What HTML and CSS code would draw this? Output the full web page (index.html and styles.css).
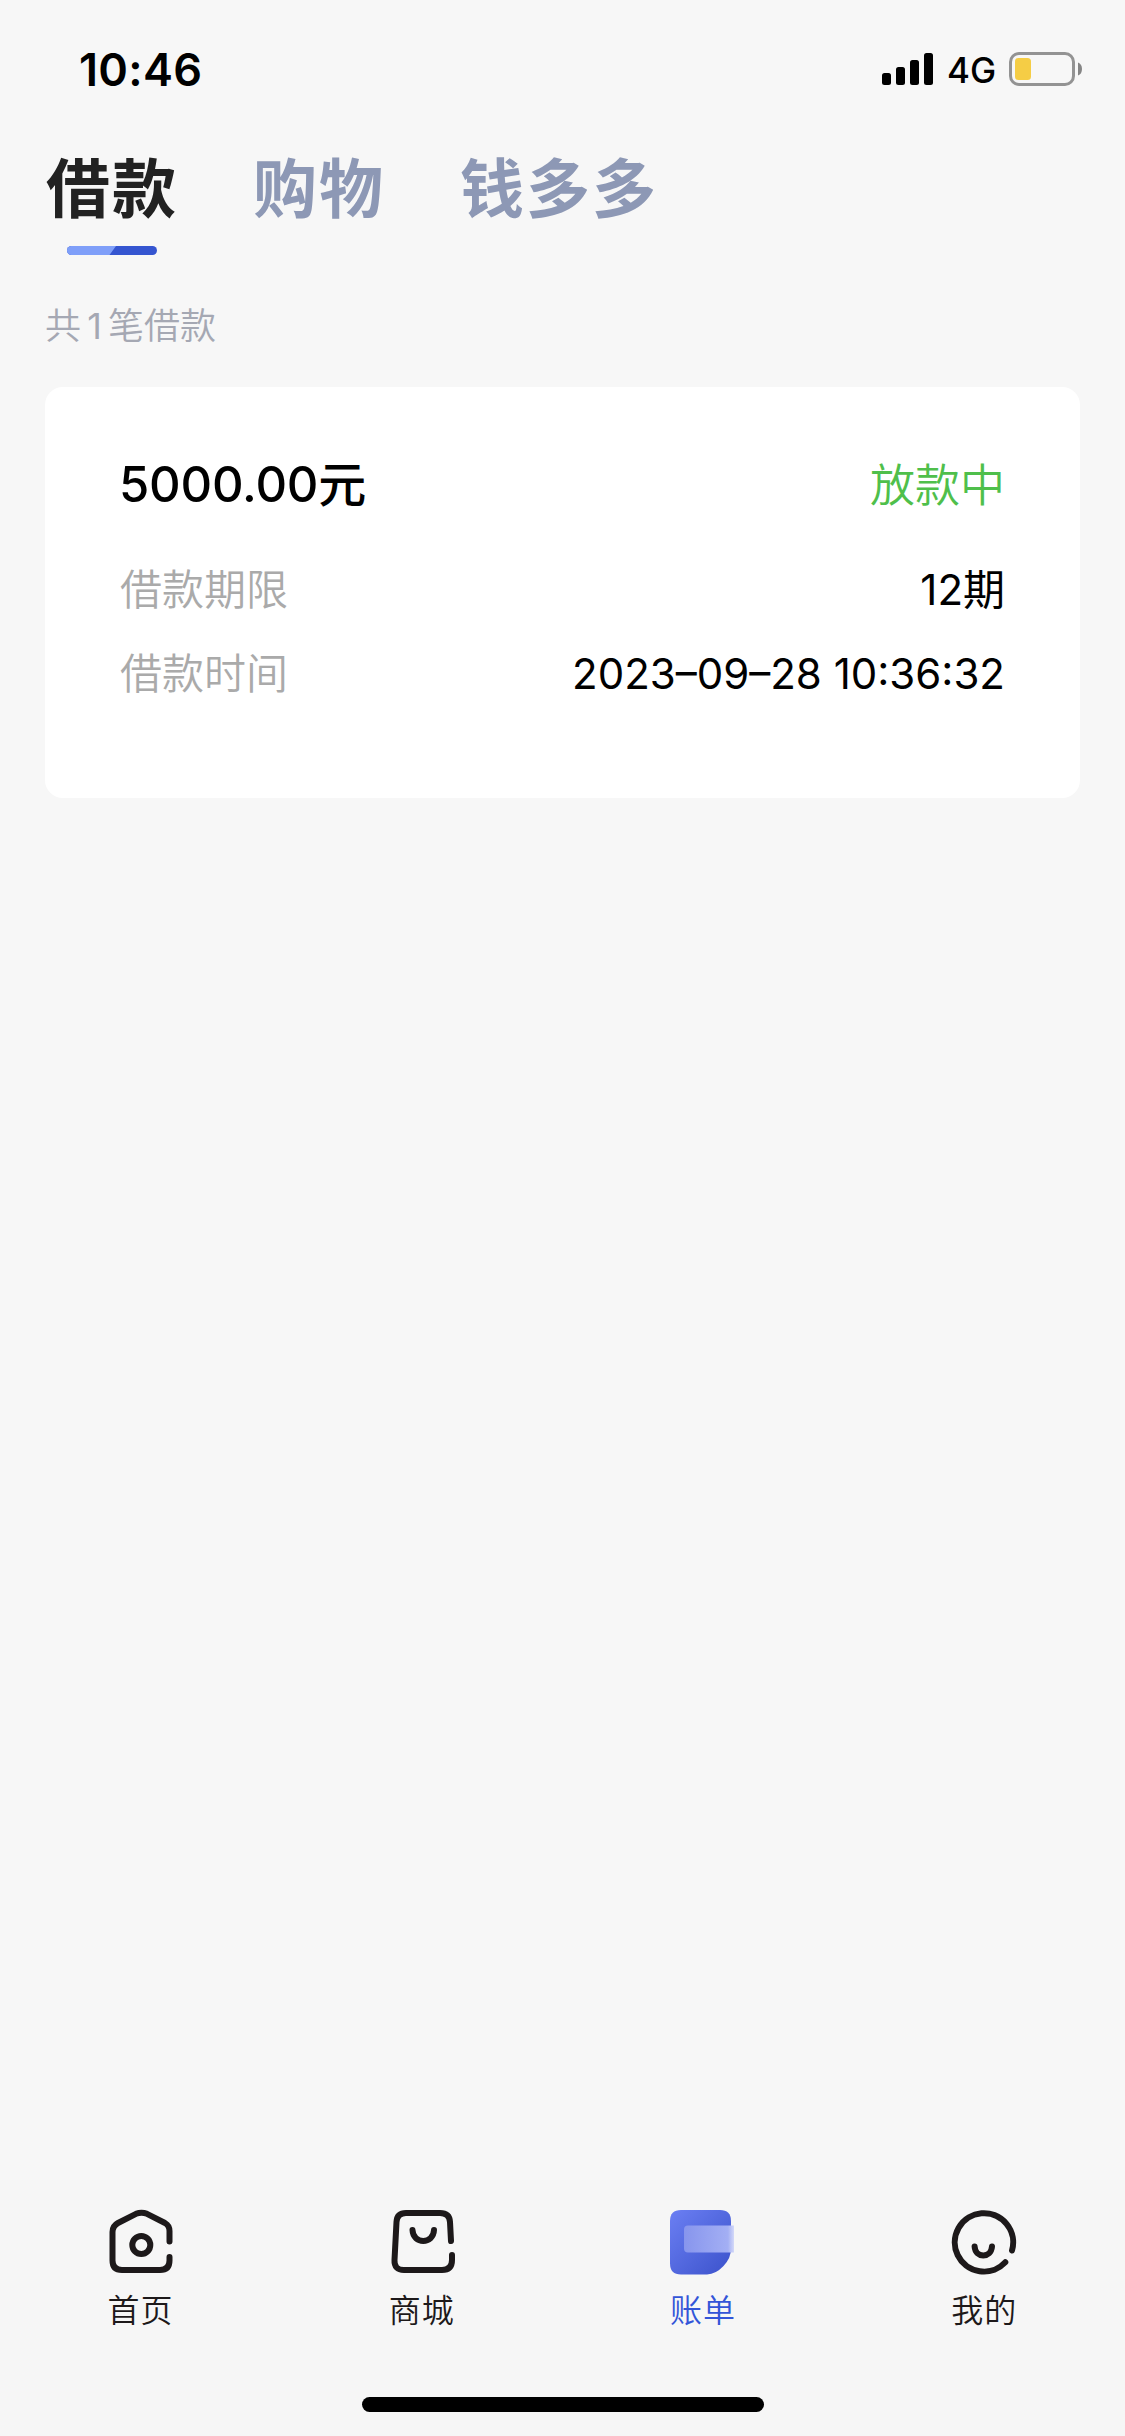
FILE: index.html
```html
<!DOCTYPE html>
<html lang="zh-CN">
<head>
<meta charset="utf-8">
<title>借款账单</title>
<link rel="stylesheet" href="styles.css">
</head>
<body>
<div class="screen">
  <header class="status">
    <span class="clock">10:46</span>
    <div class="indicators">
      <svg class="signal" width="51" height="32" viewBox="0 0 51 32"><rect x="0" y="20" width="9" height="12" rx="2.5"/><rect x="14" y="14" width="9" height="18" rx="2.5"/><rect x="28" y="7" width="9" height="25" rx="2.5"/><rect x="42" y="0" width="9" height="32" rx="2.5"/></svg>
      <span class="network">4G</span>
      <svg class="battery" width="73" height="34" viewBox="0 0 73 34"><rect x="1.5" y="1.5" width="63" height="31" rx="8.5" fill="none" stroke="#939393" stroke-width="3"/><rect x="6" y="6" width="16" height="22" rx="3.5" fill="#f5cd45"/><path d="M69 10.5Q73 12 73 17T69 23.5Z" fill="#858585"/></svg>
    </div>
  </header>
  <nav class="tabs">
    <a class="tab active">借款<svg class="underline" width="90" height="9" viewBox="0 0 90 9"><rect width="90" height="9" rx="4.5" fill="#3555d0"/><path d="M4.5 0H49L42.500 9H4.500A4.500 4.500 0 0 1 4.500 0Z" fill="#7f9ff9"/></svg></a>
    <a class="tab">购物</a>
    <a class="tab">钱多多</a>
  </nav>
  <main class="content">
    <p class="summary">共<span class="count">1</span>笔借款</p>
    <section class="card">
      <div class="card-head"><h2 class="amount">5000.00<span class="unit">元</span></h2><span class="state">放款中</span></div>
      <dl class="details">
        <div class="row"><dt>借款期限</dt><dd>12期</dd></div>
        <div class="row"><dt>借款时间</dt><dd>2023–09–28 10:36:32</dd></div>
      </dl>
    </section>
  </main>
  <footer class="bottom">
    <nav class="menu">
      <a class="item"><svg class="icon" width="66" height="66" viewBox="0 0 66 66"><path d="M61.500 32.500V22Q61.500 16.500 57 14L39 4.800Q33.500 2.500 28 4.800L10 14Q4.500 17 4.500 23V51.500Q4.500 61 14 61H52Q61.500 61 61.500 51.500V48"/><circle cx="33.300" cy="36" r="9"/></svg>首页</a>
      <a class="item"><svg class="icon" width="66" height="66" viewBox="0 0 66 66"><path d="M62 32L61 13Q60.500 4 51 4H17Q8 4 7.500 13L5.500 51Q5 61 15 61H53Q63 61 63 51V46"/><path d="M23.500 21C24 35.500 44.500 35.500 45 21"/></svg>商城</a>
      <a class="item active"><svg class="icon filled" width="66" height="66" viewBox="0 0 66 66"><defs><linearGradient id="bill" x1="0" y1="0" x2="1" y2="1"><stop offset="0" stop-color="#6b7ff3"/><stop offset="1" stop-color="#3b52cb"/></linearGradient><linearGradient id="pane" x1="0" x2="1"><stop offset="0" stop-color="#8795ed"/><stop offset=".88" stop-color="#a3aff4"/><stop offset="1" stop-color="#d4d9f8"/></linearGradient></defs><path d="M11 1H50Q61 1 61 12V40Q61 49 53.500 57T37 65.500H11Q0 65.500 0 54.500V12Q0 1 11 1Z" fill="url(#bill)"/><path d="M18 16.500H64V43.500H18Q14 43.500 14 39.500V20.500Q14 16.500 18 16.500Z" fill="url(#pane)"/></svg>账单</a>
      <a class="item"><svg class="icon" width="66" height="66" viewBox="0 0 66 66"><path d="M61 41.500A29.200 29.200 0 1 0 54.300 53.300"/><path d="M23.600 37.500C24.500 49.500 40 49.500 41 37.500"/></svg>我的</a>
    </nav>
    <div class="home-indicator"></div>
  </footer>
</div>
</body>
</html>
```
FILE: styles.css
```css
* { box-sizing: border-box; margin: 0; padding: 0; }
body { background: #f7f7f7; font-family: Inter, "Noto Sans CJK SC", sans-serif; color: #000; }
.screen { display: flex; flex-direction: column; width: 1125px; height: 2436px; }
.status { display: flex; justify-content: space-between; align-items: center; height: 138px; padding: 0 43px 0 79px; }
.clock { padding-top: 1px; font-size: 45px; font-weight: 600; line-height: 60px; letter-spacing: .3px; }
.indicators { display: flex; align-items: center; }
.signal { margin-right: 14px; }
.network { width: 62px; padding-top: 2px; font-size: 35px; font-weight: 450; line-height: 40px; }
.tabs { display: flex; gap: 75px; height: 117px; padding-left: 46px; }
.tab { display: flex; flex-direction: column; align-items: center; width: max-content; padding-top: 3px; color: #8d98b5; font-size: 64px; font-weight: 700; line-height: 96px; letter-spacing: 2px; white-space: nowrap; }
.tab.active { color: #222; }
.underline { margin-top: 9px; }
.content { flex: 1; padding: 0 45px; }
.summary { height: 132px; padding-top: 46px; color: #a5a8b3; font-size: 36px; font-weight: 350; line-height: 50px; }
.count { display: inline-block; width: 27px; font-weight: 400; text-align: center; }
.card { height: 411px; padding: 60px 75px; background: #fff; border-radius: 18px; }
.card-head, .row { display: flex; justify-content: space-between; align-items: center; }
.card-head { height: 74px; margin-bottom: 27px; }
.amount { margin-left: -1px; padding-top: 1px; font-size: 49px; font-weight: 500; line-height: 74px; letter-spacing: -.2px; }
.unit { font-size: 48px; }
.state { padding-bottom: 4px; color: #4fbf4b; font-size: 45px; font-weight: 350; }
.row { height: 84px; font-size: 42px; font-weight: 350; line-height: 60px; }
dt { color: #aaa; }
dd { font-weight: 400; }
.bottom { height: 256px; padding-top: 29px; background: #f6f6f6; }
.menu { display: grid; grid-template-columns: repeat(4, 1fr); height: 188px; }
.item { display: flex; flex-direction: column; align-items: center; color: #1d191a; font-size: 32px; font-weight: 350; line-height: 48px; letter-spacing: 1px; }
.item.active { color: #3355d8; }
.icon { margin-bottom: 12px; fill: none; stroke: #1d191a; stroke-width: 6; stroke-linecap: round; stroke-linejoin: round; }
.icon.filled { stroke: none; }
.home-indicator { width: 402px; height: 15px; margin: 0 auto; background: #000; border-radius: 8px; }
```
